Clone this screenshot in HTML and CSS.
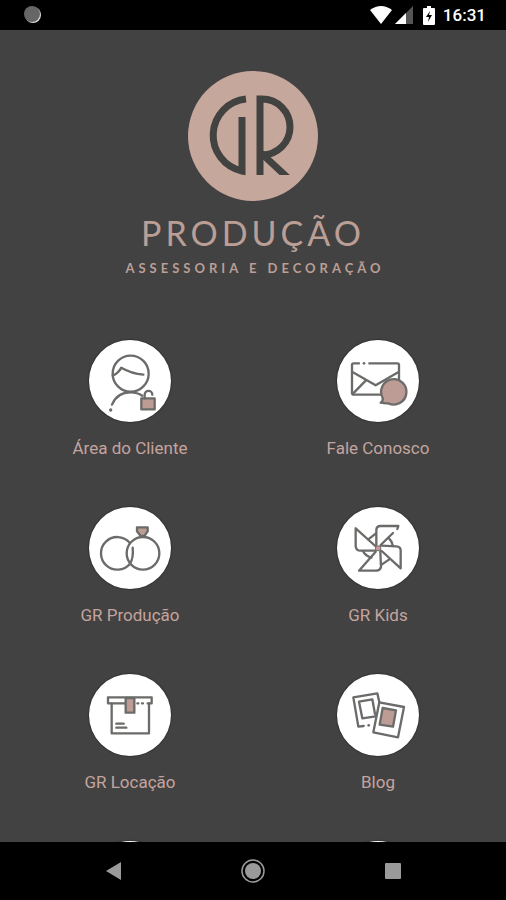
FILE: index.html
```html
<!DOCTYPE html>
<html lang="pt-BR">
<head>
  <meta charset="UTF-8">
  <title>GR Produção</title>
  <meta name="viewport" content="width=device-width, initial-scale=1.0">
  <link rel="stylesheet" href="styles.css">
</head>
<body>
  <header class="status-bar">
    <svg class="status-dot" width="18" height="18" viewBox="0 0 18 18">
      <circle cx="9" cy="9" r="8" fill="#ddd"/>
      <circle cx="8" cy="8" r="8" fill="#666"/>
    </svg>
    <div class="status-icons">
      <svg width="22" height="18" viewBox="0 0 22 18">
        <path d="M0 4Q11-4 22 4L11 18Z" fill="#fff"/>
      </svg>
      <svg class="signal" width="18" height="18" viewBox="0 0 18 18">
        <path d="M18 0V18H0Z" fill="#555"/>
        <path d="M11 7V18H0Z" fill="#fff"/>
      </svg>
      <svg class="battery" width="12" height="19" viewBox="0 0 12 19">
        <path d="M1 2H4V0H8V2H11Q12 2 12 3V18Q12 19 11 19H1Q0 19 0 18V3Q0 2 1 2Z" fill="#fff"/>
        <path d="M7 5L3 11H6L5 16L9 9H6Z" fill="#000"/>
      </svg>
      <span class="clock">16:31</span>
    </div>
  </header>

  <main>
    <div class="logo">
      <svg width="130" height="130" viewBox="0 0 130 130">
        <circle cx="65" cy="65" r="65" fill="#c6a79b"/>
        <g fill="none" stroke="#424240" stroke-width="7">
          <path d="M58 28A36.5 36.5 0 0 0 54 100V46"/>
          <path d="M72 104V28H74A28 28 0 0 1 74 84H72"/>
          <path d="M73 82L101 108" clip-path="url(#leg)"/>
        </g>
        <clipPath id="leg"><path d="M72 80H110V104H72Z"/></clipPath>
      </svg>
      <h1>PRODUÇÃO</h1>
      <p>ASSESSORIA E DECORAÇÃO</p>
    </div>

    <nav class="menu">
      <a href="#" class="menu-item">
        <svg class="icon" viewBox="0 0 246 246">
          <circle cx="125" cy="101" r="54"/>
          <path d="M71 107Q88 100 97 83Q128 101 163 104"/>
          <path d="M69 194Q84 157 125 157Q145 157 160 167"/>
          <circle class="dot" cx="65" cy="210" r="5"/>
          <path class="pink" d="M157 175H197V208H157Z"/>
          <path d="M167 175V164A11 11 0 0 1 190 164"/>
        </svg>
        <span>Área do Cliente</span>
      </a>
      <a href="#" class="menu-item">
        <svg class="icon" viewBox="0 0 246 246">
          <path d="M66 70H50Q45 70 45 75V159Q45 164 50 164H135"/>
          <path d="M97 70H181Q186 70 186 75V120"/>
          <path d="M45 95L116 136L186 95M48 161L86 122"/>
          <circle class="dot" cx="81" cy="70" r="4"/>
          <path class="pink" d="M137 174A38 38 0 1 1 154 190Q144 191 131 188Q139 183 137 174Z"/>
        </svg>
        <span>Fale Conosco</span>
      </a>
      <a href="#" class="menu-item">
        <svg class="icon" viewBox="0 0 246 246">
          <path d="M122 107A49 49 0 1 0 123 170Q134 153 131 122"/>
          <circle cx="162" cy="139" r="49"/>
          <path class="pink" d="M144 61H176V73L166 87H155L144 73Z"/>
        </svg>
        <span>GR Produção</span>
      </a>
      <a href="#" class="menu-item">
        <svg class="icon" viewBox="0 0 246 246">
          <path d="M118 114V70Q118 57 130 57H184L181 66M168 78L131 114"/>
          <path d="M115 117L56 64V118Q58 131 70 131H114"/>
          <path d="M116 134L66 191H118Q130 190 132 180L130 134"/>
          <path d="M134 116L178 118Q191 119 191 130V184L134 132"/>
          <path d="M94 97L116 80M154 92Q164 101 168 117M157 157L134 173M78 132Q84 146 103 152"/>
          <path class="center" d="M117 117H131V131H117Z"/>
        </svg>
        <span>GR Kids</span>
      </a>
      <a href="#" class="menu-item">
        <svg class="icon" viewBox="0 0 246 246">
          <path d="M110 88H57V70H188V88H176M145 88H148M159 88H162"/>
          <path d="M68 88V178H180V88"/>
          <path class="pink" d="M110 72H136V116H110Z"/>
          <path d="M82 149H104M82 161H112"/>
        </svg>
        <span>GR Locação</span>
      </a>
      <a href="#" class="menu-item">
        <svg class="icon" viewBox="0 0 246 246">
          <path d="M127 85L121 58L49 70L64 158L80 156"/>
          <path d="M116 127L76 133L66 83L106 76L114 120"/>
          <circle class="dot" cx="95" cy="154" r="4"/>
          <path d="M127 85L201 99L183 190L109 175Z"/>
          <path class="pink" d="M137 102L177 109L168 158L128 152Z"/>
        </svg>
        <span>Blog</span>
      </a>
      <a href="#" class="menu-item">
        <svg class="icon" viewBox="0 0 246 246"></svg>
      </a>
      <a href="#" class="menu-item">
        <svg class="icon" viewBox="0 0 246 246"></svg>
      </a>
    </nav>
  </main>

  <footer class="nav-bar">
    <button type="button" aria-label="Voltar">
      <svg width="24" height="24" viewBox="0 0 24 24"><path d="M5 12L20 3V21Z" fill="#9a9a9a"/></svg>
    </button>
    <button type="button" aria-label="Início">
      <svg width="24" height="24" viewBox="0 0 24 24">
        <circle cx="12" cy="12" r="11" fill="none" stroke="#9a9a9a" stroke-width="1.5"/>
        <circle cx="12" cy="12" r="8" fill="#9a9a9a"/>
      </svg>
    </button>
    <button type="button" aria-label="Recentes">
      <svg width="24" height="24" viewBox="0 0 24 24"><rect x="4" y="4" width="16" height="16" rx="1" fill="#9a9a9a"/></svg>
    </button>
  </footer>
</body>
</html>
```
FILE: styles.css
```css
:root {
  --bg: #424242;
  --rose: #c6a79b;
  --label: #c5a49f;
  --line: #6b6b69;
}

* {
  box-sizing: border-box;
}

body {
  margin: 0;
  height: 100vh;
  display: flex;
  flex-direction: column;
  background: var(--bg);
  font-family: Roboto, sans-serif;
}

/* Status bar */
.status-bar {
  display: flex;
  align-items: center;
  justify-content: space-between;
  height: 30px;
  padding: 0 20px 0 24px;
  background: #000;
  color: #fff;
}

.status-icons {
  display: flex;
  align-items: center;
}

.signal {
  margin-left: 3px;
}

.battery {
  margin: 0 8px 0 10px;
}

.clock {
  font-size: 17px;
  line-height: 30px;
  font-weight: 500;
}

main {
  flex: 1;
  min-height: 0;
  overflow: hidden;
}

/* Logo */
.logo {
  padding-top: 41px;
  text-align: center;
  color: #bb9e95;
  font-family: Lato, sans-serif;
}

.logo svg {
  display: block;
  margin: 0 auto;
}

.logo h1 {
  margin: 11px 0 0;
  font-size: 34px;
  line-height: 42px;
  font-weight: 400;
  letter-spacing: 4px;
}

.logo p {
  margin: 4px 0 0;
  padding-left: 4px;
  font-size: 13px;
  line-height: 20px;
  font-weight: 700;
  letter-spacing: 4px;
}

/* Menu */
.menu {
  display: grid;
  grid-template-columns: 1fr 1fr;
  row-gap: 46px;
  padding: 62px 4px 0 6px;
}

.menu-item {
  display: flex;
  flex-direction: column;
  align-items: center;
  gap: 13px;
  color: var(--label);
  font-size: 17px;
  line-height: 26px;
  text-decoration: none;
}

.icon {
  width: 82px;
  height: 82px;
  border-radius: 50%;
  background: #fff;
  box-shadow: 0 0 1px 1px #333;
  fill: none;
  stroke: var(--line);
  stroke-width: 7;
  stroke-linecap: round;
  stroke-linejoin: round;
}

.icon .dot {
  fill: var(--line);
  stroke: none;
}

.icon .pink {
  fill: #bd9c95;
}

.icon .center {
  fill: #c99;
  stroke-width: 3;
}

/* Navigation bar */
.nav-bar {
  display: flex;
  align-items: center;
  justify-content: center;
  gap: 116px;
  height: 58px;
  background: #000;
}

.nav-bar button {
  padding: 0;
  border: none;
  background: none;
  cursor: pointer;
}

.nav-bar svg {
  display: block;
}
```
